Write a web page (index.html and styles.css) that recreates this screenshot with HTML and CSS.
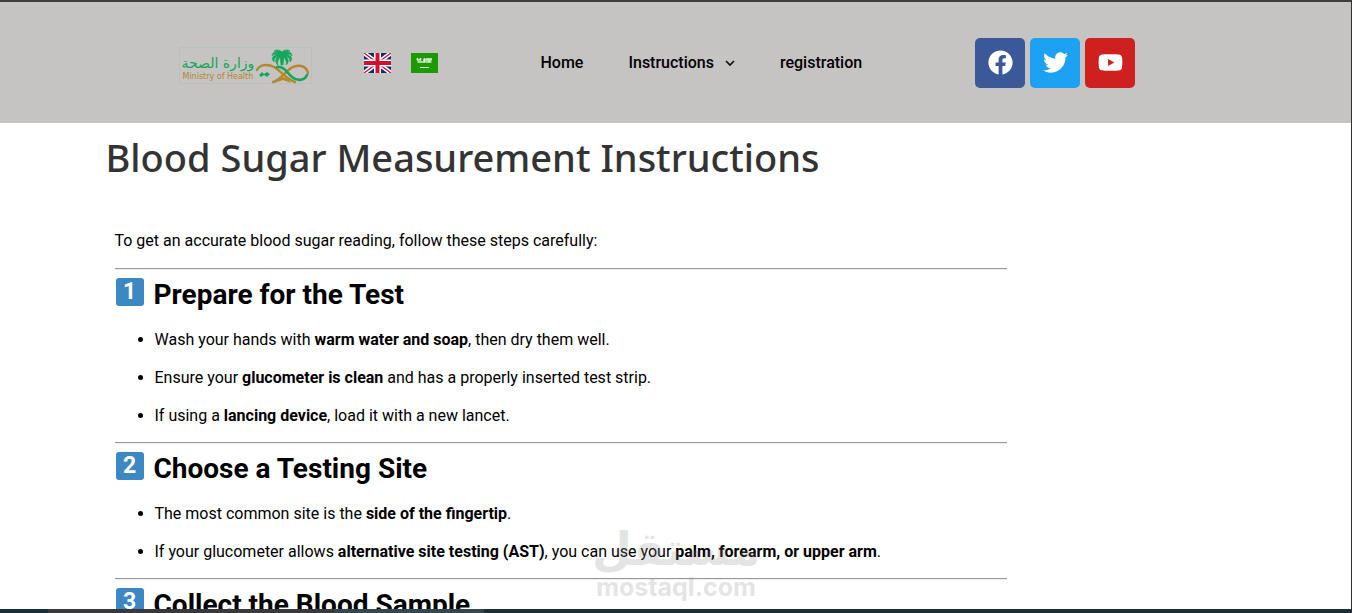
FILE: index.html
```html
<!DOCTYPE html>
<html lang="en">
<head>
<meta charset="utf-8">
<meta name="viewport" content="width=device-width, initial-scale=1">
<title>Blood Sugar Measurement Instructions</title>
<link rel="stylesheet" href="styles.css">
</head>
<body>
<header class="site-header">
  <div class="container header-row">
    <a class="brand" href="#" aria-label="Ministry of Health">
      <span class="brand-text">
        <span class="brand-ar" lang="ar" dir="rtl">وزارة الصحة</span>
        <span class="brand-en">Ministry of Health</span>
      </span>
      <svg class="brand-mark" viewBox="0 0 54 36" aria-hidden="true">
        <g fill="none" stroke-linecap="round">
          <path d="M2 22C5 16 13 16 19 19C26 23 32 32 40 34" stroke="#b5862b" stroke-width="2.4"/>
          <path d="M53 25C51 17 43 16 36 20C30 24 25 32 18 34" stroke="#b5862b" stroke-width="2.4"/>
          <path d="M22 19C29 18 32 25 37 29C43 34 50 32 52 27" stroke="#13a75b" stroke-width="2.6"/>
        </g>
        <path d="M19 35l4-4 5-2 5 2 3 4-8-3z" fill="#b5862b"/>
        <path d="M26 17l-1-8c-2 3-3 6-2 8-3-2-3-6 0-9-3 1-4 4-4 6-3-3-2-7 3-7-2-1-4-1-5 1 0-4 4-5 6-3-1-1-2-2-4-2 3-2 6-1 8 1 2-2 5-3 8-1-2 0-3 1-4 2 2-2 6-1 6 3-1-2-3-2-5-1 5 0 6 4 3 7 0-3-1-5-4-6 3 3 3 7 0 9 1-2 0-5-2-8l-1 8z" fill="#13a75b" stroke="#13a75b" stroke-width=".6"/>
        <path d="M4 27l3-3 2 2 3-2 3 2-3 3-3-2-3 2z" fill="#13a75b"/>
      </svg>
    </a>
    <div class="languages">
      <a href="#" aria-label="English">
        <svg class="flag" viewBox="0 0 27 20" aria-hidden="true">
          <path fill="#0b2a6f" d="M0 0h27v20H0z"/>
          <path d="M0 0l27 20M27 0L0 20" stroke="#fff" stroke-width="4.4"/>
          <path d="M0 0l27 20M27 0L0 20" stroke="#cf1030" stroke-width="1.4"/>
          <path d="M13.500 0v20M0 10h27" stroke="#fff" stroke-width="7"/>
          <path d="M13.500 0v20M0 10h27" stroke="#cf1030" stroke-width="4"/>
        </svg>
      </a>
      <a href="#" aria-label="العربية">
        <svg class="flag" viewBox="0 0 27 20" aria-hidden="true">
          <path fill="#1b9b00" d="M0 0h27v20H0z"/>
          <path d="M6.500 5v2h3V5m1 4h3V5m-1.500 2h4V5m2 0v4m-2-2h4V5M6.500 9h4m4 0h6" fill="none" stroke="#d8f0d0" stroke-width="1.600"/>
          <path d="M9 14.500h9" stroke="#d8f0d0"/>
        </svg>
      </a>
    </div>
    <nav class="menu" aria-label="Main">
      <a href="#">Home</a>
      <a href="#">Instructions
        <svg class="chevron" viewBox="0 0 10 10" aria-hidden="true"><path d="M1 3l4 4 4-4" fill="none" stroke="#111" stroke-width="1.700"/></svg>
      </a>
      <a href="#">registration</a>
    </nav>
    <div class="social">
      <a class="facebook" href="#" aria-label="Facebook">
        <svg viewBox="0 0 512 512" aria-hidden="true"><path d="M504 256C504 119 393 8 256 8S8 119 8 256c0 123.780 90.690 226.380 209.250 245V327.690h-63V256h63v-54.640c0-62.150 37-96.480 93.670-96.480 27.140 0 55.520 4.840 55.520 4.840v61h-31.280c-30.800 0-40.410 19.120-40.410 38.730V256h68.780l-11 71.690h-57.780V501C413.310 482.380 504 379.780 504 256z"/></svg>
      </a>
      <a class="twitter" href="#" aria-label="Twitter">
        <svg viewBox="0 0 512 512" aria-hidden="true"><path d="M459.370 151.716c.325 4.548.325 9.097.325 13.645 0 138.720-105.583 298.558-298.558 298.558-59.452 0-114.680-17.219-161.137-47.106 8.447.974 16.568 1.299 25.340 1.299 49.055 0 94.213-16.568 130.274-44.832-46.132-.975-84.792-31.188-98.112-72.772 6.498.974 12.995 1.624 19.818 1.624 9.421 0 18.843-1.300 27.614-3.573-48.081-9.747-84.143-51.980-84.143-102.985v-1.299c13.969 7.797 30.214 12.670 47.431 13.319-28.264-18.843-46.781-51.005-46.781-87.391 0-19.492 5.197-37.360 14.294-52.954 51.655 63.675 129.300 105.258 216.365 109.807-1.624-7.797-2.599-15.918-2.599-24.040 0-57.828 46.782-104.934 104.934-104.934 30.213 0 57.502 12.670 76.670 33.137 23.715-4.548 46.456-13.320 66.599-25.340-7.798 24.366-24.366 44.833-46.132 57.827 21.117-2.273 41.584-8.122 60.426-16.243-14.292 20.791-32.161 39.308-52.628 54.253z"/></svg>
      </a>
      <a class="youtube" href="#" aria-label="YouTube">
        <svg viewBox="0 0 576 512" aria-hidden="true"><path d="M549.655 124.083c-6.281-23.650-24.787-42.276-48.284-48.597C458.781 64 288 64 288 64S117.220 64 74.629 75.486c-23.497 6.322-42.003 24.947-48.284 48.597-11.412 42.867-11.412 132.305-11.412 132.305s0 89.438 11.412 132.305c6.281 23.650 24.787 41.500 48.284 47.821C117.220 448 288 448 288 448s170.780 0 213.371-11.486c23.497-6.321 42.003-24.171 48.284-47.821 11.412-42.867 11.412-132.305 11.412-132.305s0-89.438-11.412-132.305zm-317.510 213.508V175.185l142.739 81.205-142.739 81.201z"/></svg>
      </a>
    </div>
  </div>
</header>
<main class="page">
  <div class="container">
    <h1>Blood Sugar Measurement Instructions</h1>
    <article class="guide">
      <p>To get an accurate blood sugar reading, follow these steps carefully:</p>
      <hr>
      <h2><span class="keycap">1</span>Prepare for the Test</h2>
      <ul>
        <li>Wash your hands with <strong>warm water and soap</strong>, then dry them well.</li>
        <li>Ensure your <strong>glucometer is clean</strong> and has a properly inserted test strip.</li>
        <li>If using a <strong>lancing device</strong>, load it with a new lancet.</li>
      </ul>
      <hr>
      <h2><span class="keycap">2</span>Choose a Testing Site</h2>
      <ul>
        <li>The most common site is the <strong>side of the fingertip</strong>.</li>
        <li>If your glucometer allows <strong>alternative site testing (AST)</strong>, you can use your <strong>palm, forearm, or upper arm</strong>.</li>
      </ul>
      <hr>
      <h2><span class="keycap">3</span>Collect the Blood Sample</h2>
    </article>
  </div>
</main>
<div class="bottom-strip"><span class="strip-start"></span><span class="strip-dark"></span><span class="strip-light"></span></div>
<div class="watermark" aria-hidden="true">
  <span class="watermark-ar" lang="ar" dir="rtl">مستقل</span>
  <span class="watermark-en">mostaql.com</span>
</div>
</body>
</html>
```
FILE: styles.css
```css
* { box-sizing: border-box; }

body {
  margin: 0;
  height: 100vh;
  overflow: hidden;
  display: flex;
  flex-direction: column;
  border-top: 2px solid #3e3d3d;
  border-right: 1px solid #303030;
  background: #fff;
  color: #000;
  font-family: Roboto, "Liberation Sans", sans-serif;
  font-size: 16px;
  line-height: 22px;
}

a { color: inherit; text-decoration: none; }

.container { width: 100%; max-width: 1140px; margin: 0 auto; }

.site-header { flex: none; background: #c6c4c2; padding: 36px 0 35px; }

.header-row { display: flex; align-items: center; padding-left: 73px; }

.brand {
  display: flex;
  align-items: center;
  justify-content: space-between;
  width: 133px;
  height: 37px;
  padding: 0 2px;
  margin-top: 5px;
  border: 1px solid #b9c2ba;
}
.brand-text { display: flex; flex-direction: column; align-items: center; white-space: nowrap; padding-top: 4px; }
.brand-ar { color: #13a75b; font: 14px/18px "DejaVu Sans", sans-serif; }
.brand-en { color: #b5862b; font: 8px/10px "DejaVu Sans", sans-serif; }
.brand-mark { flex: none; width: 54px; height: 36px; }

.languages { display: flex; gap: 20px; margin-left: 52px; }
.flag { display: block; width: 27px; height: 20px; }

.menu { display: flex; gap: 45px; margin-left: 103px; font-weight: 500; }
.menu a { display: flex; align-items: center; gap: 11px; }
.chevron { width: 10px; height: 10px; }

.social { display: flex; gap: 5px; margin-left: 113px; }
.social a { display: flex; align-items: center; justify-content: center; width: 50px; height: 50px; padding-bottom: 2px; border-radius: 5px; }
.social svg { width: 25px; height: 25px; fill: #fff; }
.facebook { background: #3b5998; }
.twitter { background: #1da1f2; }
.youtube { background: #cd201f; }

.page { flex: 1; min-height: 0; overflow: hidden; }

h1 {
  margin: 10px 0 0;
  color: #333;
  font: 500 38px/48px "Noto Sans", "Open Sans", sans-serif;
}

.guide { max-width: 910px; padding: 49px 9px 0; }
.guide p { margin: 0 0 16px; }
.guide hr { height: 2px; margin: 0; border: 0; border-top: 1px solid #9a9a9a; border-bottom: 1px solid #eee; }
.guide h2 { display: flex; align-items: center; gap: 10px; margin: 7px 0 16px; padding-left: 1px; font-size: 28px; line-height: 36px; font-weight: 700; }
.guide ul { display: flex; flex-direction: column; gap: 16px; margin: 0 0 15px; padding-left: 40px; }
.guide strong { font-weight: 700; }

.keycap {
  width: 28px;
  height: 28px;
  margin-bottom: 6px;
  border-radius: 3px;
  background: #3b88c3;
  color: #fff;
  font: 700 23px/28px Roboto, sans-serif;
  text-align: center;
}

.bottom-strip { flex: none; display: flex; height: 4px; background: #1b2f36; }
.strip-start { width: 48px; background: #18313a; }
.strip-dark { width: 287px; background: #39383a; }
.strip-light { width: 149px; background: #35474e; }

.watermark {
  position: absolute;
  left: 50%;
  bottom: 13px;
  width: 162px;
  margin-left: -81px;
  display: flex;
  flex-direction: column;
  align-items: center;
  color: #888;
  opacity: 0.22;
  white-space: nowrap;
  pointer-events: none;
}
.watermark-ar { font: 700 46px/50px "DejaVu Sans", sans-serif; }
.watermark-en { font: 700 25px/26px Inter, "Liberation Sans", sans-serif; }
```
